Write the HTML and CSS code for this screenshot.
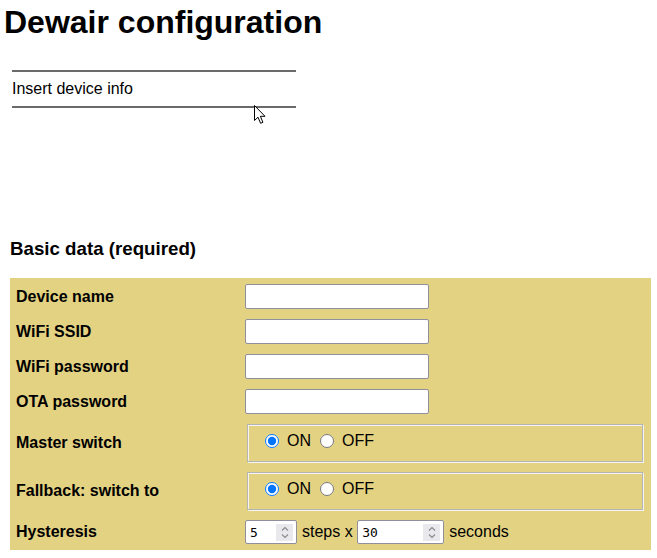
FILE: index.html
```html
<!DOCTYPE html>
<html lang="en">
<head>
<meta charset="utf-8">
<title>Dewair configuration</title>
<link rel="stylesheet" href="styles.css">
</head>
<body>
<h1 class="title">Dewair configuration</h1>
<div class="info">Insert device info</div>
<h3 class="section">Basic data (required)</h3>
<table class="form">
  <tr>
    <td class="label">Device name</td>
    <td><input class="text" type="text"></td>
  </tr>
  <tr>
    <td class="label">WiFi SSID</td>
    <td><input class="text" type="text"></td>
  </tr>
  <tr>
    <td class="label">WiFi password</td>
    <td><input class="text" type="password"></td>
  </tr>
  <tr>
    <td class="label">OTA password</td>
    <td><input class="text" type="password"></td>
  </tr>
  <tr>
    <td class="label">Master switch</td>
    <td><fieldset class="radios"><input type="radio" name="master" checked><span class="opt">ON</span><input type="radio" name="master"><span class="opt">OFF</span></fieldset></td>
  </tr>
  <tr>
    <td class="label">Fallback: switch to</td>
    <td><fieldset class="radios"><input type="radio" name="fallback" checked><span class="opt">ON</span><input type="radio" name="fallback"><span class="opt">OFF</span></fieldset></td>
  </tr>
  <tr>
    <td class="label">Hysteresis</td>
    <td>
      <div class="hyst">
        <span class="num num-steps"><input type="number" value="5"><span class="spin"><svg width="8" height="13" viewBox="0 0 8 13"><path d="M1 4.5 L4 1.5 L7 4.5 M1 8.5 L4 11.5 L7 8.5" fill="none" stroke="#8a8a8a" stroke-width="1.1"/></svg></span></span>
        <span class="unit">steps x</span>
        <span class="num num-secs"><input type="number" value="30"><span class="spin"><svg width="8" height="13" viewBox="0 0 8 13"><path d="M1 4.5 L4 1.5 L7 4.5 M1 8.5 L4 11.5 L7 8.5" fill="none" stroke="#8a8a8a" stroke-width="1.1"/></svg></span></span>
        <span class="unit unit-last">seconds</span>
      </div>
    </td>
  </tr>
</table>
<svg class="cursor" width="14" height="20" viewBox="0 0 14 20"><path d="M0.5 0.5 L0.5 15.5 L4 12.2 L6.6 18.3 L8.9 17.3 L6.4 11.3 L11 11.3 Z" fill="#fff" stroke="#000" stroke-width="1" stroke-linejoin="round"/></svg>
</body>
</html>
```
FILE: styles.css
```css
html, body {
  margin: 0;
  padding: 0;
  background: #fff;
}
body {
  font-family: "Liberation Sans", Arial, sans-serif;
  font-size: 16px;
  color: #000;
  position: relative;
}
.title {
  font-size: 32px;
  font-weight: bold;
  margin: 4px 0 0 4px;
  line-height: normal;
}
.info {
  width: 284px;
  margin: 29px 0 0 12px;
  border-top: 2px solid #6a6a6a;
  border-bottom: 2px solid #6a6a6a;
  padding: 8px 0;
  line-height: 18px;
}
.section {
  font-size: 18.72px;
  font-weight: bold;
  margin: 130px 0 0 10px;
  line-height: normal;
}
.form {
  margin: 18px 0 0 10px;
  width: 641px;
  background: #e3d282;
  border-spacing: 2px;
  border-collapse: separate;
}
.form td {
  padding: 4px;
  vertical-align: middle;
}
.form td.label {
  width: 219px;
  font-weight: bold;
}
.text {
  display: block;
  box-sizing: border-box;
  width: 184px;
  height: 25px;
  margin: 0;
  border: 1px solid #8f8f9d;
  border-radius: 2px;
  background: #fff;
  padding: 1px 3px;
}
.radios {
  box-sizing: border-box;
  height: 38px;
  margin: 0 2px;
  padding: 7px 12px 0;
  border: 1px solid #b4b4b4;
  box-shadow: inset 1px 1px 0 #f4f4f4, 1px 1px 0 #f4f4f4;
  display: flex;
  align-items: flex-start;
  line-height: 18px;
  font-size: 16px;
}
.radios input {
  margin: 2px 0 0 5px;
  width: 14px;
  height: 14px;
  flex: none;
}
.opt {
  margin: 0 4px 0 8px;
}
.hyst {
  display: flex;
  align-items: center;
  height: 24px;
}
.num {
  display: inline-flex;
  align-items: center;
  box-sizing: border-box;
  height: 24px;
  border: 1px solid #8f8f9d;
  border-radius: 2px;
  background: #fff;
  padding: 0 3px 0 4px;
}
.num-steps { width: 52px; }
.num-secs { width: 87px; }
.num input {
  flex: 1;
  min-width: 0;
  border: none;
  outline: none;
  padding: 0;
  margin: 0;
  background: transparent;
  font-family: "DejaVu Sans Mono", "Liberation Mono", monospace;
  font-size: 13px;
  color: #000;
  -moz-appearance: textfield;
}
.num input::-webkit-inner-spin-button,
.num input::-webkit-outer-spin-button {
  -webkit-appearance: none;
  margin: 0;
}
.spin {
  width: 17px;
  height: 17px;
  background: #e9e9ed;
  display: flex;
  align-items: center;
  justify-content: center;
}
.unit {
  margin: 0 4.5px 0 5px;
}
.unit-last {
  margin: 0 0 0 5px;
}
.cursor {
  position: absolute;
  left: 254px;
  top: 105px;
}
```
